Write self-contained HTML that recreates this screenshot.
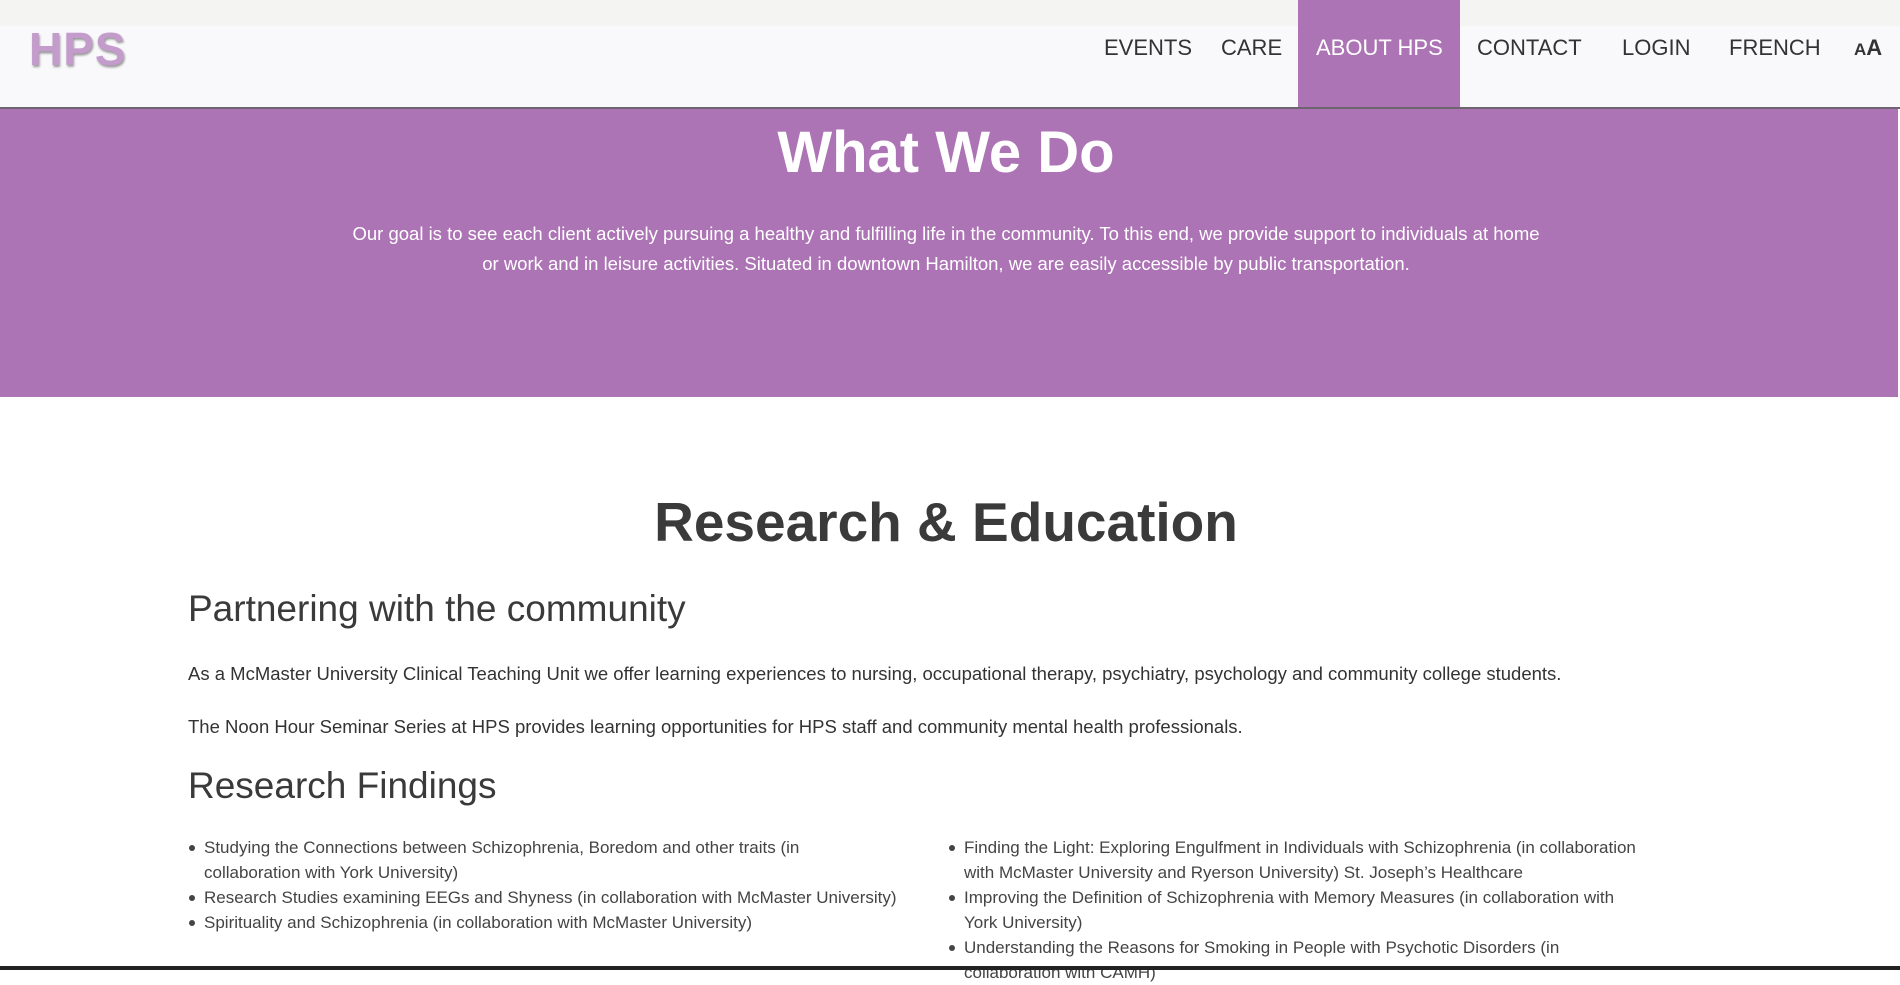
<!DOCTYPE html>
<html><head><meta charset="utf-8"><style>
*{margin:0;padding:0;box-sizing:border-box}
body{width:1900px;height:970px;overflow:hidden;background:#fff;font-family:"Liberation Sans",sans-serif;color:#333;position:relative}
.top{position:absolute;left:0;top:0;width:1900px;height:26px;background:#f4f4f2}
.hdr{position:absolute;left:0;top:26px;width:1900px;height:81px;background:#f9f8fb}
.line{position:absolute;left:0;top:107px;width:1900px;height:2px;background:#6e6470}
.logo{position:absolute;left:29px;top:22px;font-size:46px;font-weight:bold;color:#c39ccc;text-shadow:1px 2px 2px #999;letter-spacing:1px}
.nav a{position:absolute;top:35px;font-size:22px;color:#333;text-decoration:none;white-space:nowrap}
.active{position:absolute;left:1298px;top:0;width:162px;height:107px;background:#ac74b4}
.hero{position:absolute;left:0;top:109px;width:1898px;height:288px;background:#ac74b4;color:#fff;text-align:center}
.hero h1{position:absolute;left:0;width:1892px;top:10px;font-size:58px;font-weight:bold}
.hero p{position:absolute;left:300px;width:1292px;top:110px;font-size:18.5px;line-height:30px;white-space:nowrap}
h2{position:absolute;left:0;width:1892px;text-align:center;top:490px;font-size:55px;font-weight:bold;color:#3a3a3a}
h3{position:absolute;left:188px;font-size:37px;font-weight:normal;color:#3a3a3a}
.p{position:absolute;left:188px;font-size:18.5px;color:#333;white-space:nowrap}
ul{position:absolute;list-style:none;font-size:17px;line-height:25px;color:#444;white-space:nowrap}
li{position:relative;padding-left:16px}
li:before{content:"";position:absolute;left:1px;top:10px;width:6px;height:6px;border-radius:50%;background:#444}
.bot{position:absolute;left:0;top:966px;width:1900px;height:4px;background:#222}
</style></head><body>
<div class="top"></div><div class="hdr"></div>
<div class="active"></div>
<div class="logo">HPS</div>
<div class="nav">
<a style="left:1104px">EVENTS</a>
<a style="left:1221px">CARE</a>
<a style="left:1316px;color:#fff">ABOUT HPS</a>
<a style="left:1477px">CONTACT</a>
<a style="left:1622px">LOGIN</a>
<a style="left:1729px">FRENCH</a>
<a style="left:1854px;font-weight:bold"><span style="font-size:17px">A</span>A</a>
</div>
<div class="line"></div>
<div class="hero"><h1>What We Do</h1>
<p>Our goal is to see each client actively pursuing a healthy and fulfilling life in the community. To this end, we provide support to individuals at home<br>or work and in leisure activities. Situated in downtown Hamilton, we are easily accessible by public transportation.</p></div>
<h2>Research &amp; Education</h2>
<h3 style="top:588px">Partnering with the community</h3>
<div class="p" style="top:663px">As a McMaster University Clinical Teaching Unit we offer learning experiences to nursing, occupational therapy, psychiatry, psychology and community college students.</div>
<div class="p" style="top:716px">The Noon Hour Seminar Series at HPS provides learning opportunities for HPS staff and community mental health professionals.</div>
<h3 style="top:765px">Research Findings</h3>
<ul style="left:188px;top:835px">
<li>Studying the Connections between Schizophrenia, Boredom and other traits (in<br>collaboration with York University)</li>
<li>Research Studies examining EEGs and Shyness (in collaboration with McMaster University)</li>
<li>Spirituality and Schizophrenia (in collaboration with McMaster University)</li>
</ul>
<ul style="left:948px;top:835px">
<li>Finding the Light: Exploring Engulfment in Individuals with Schizophrenia (in collaboration<br>with McMaster University and Ryerson University) St. Joseph’s Healthcare</li>
<li>Improving the Definition of Schizophrenia with Memory Measures (in collaboration with<br>York University)</li>
<li>Understanding the Reasons for Smoking in People with Psychotic Disorders (in<br>collaboration with CAMH)</li>
</ul>
<div class="bot"></div>
</body></html>
